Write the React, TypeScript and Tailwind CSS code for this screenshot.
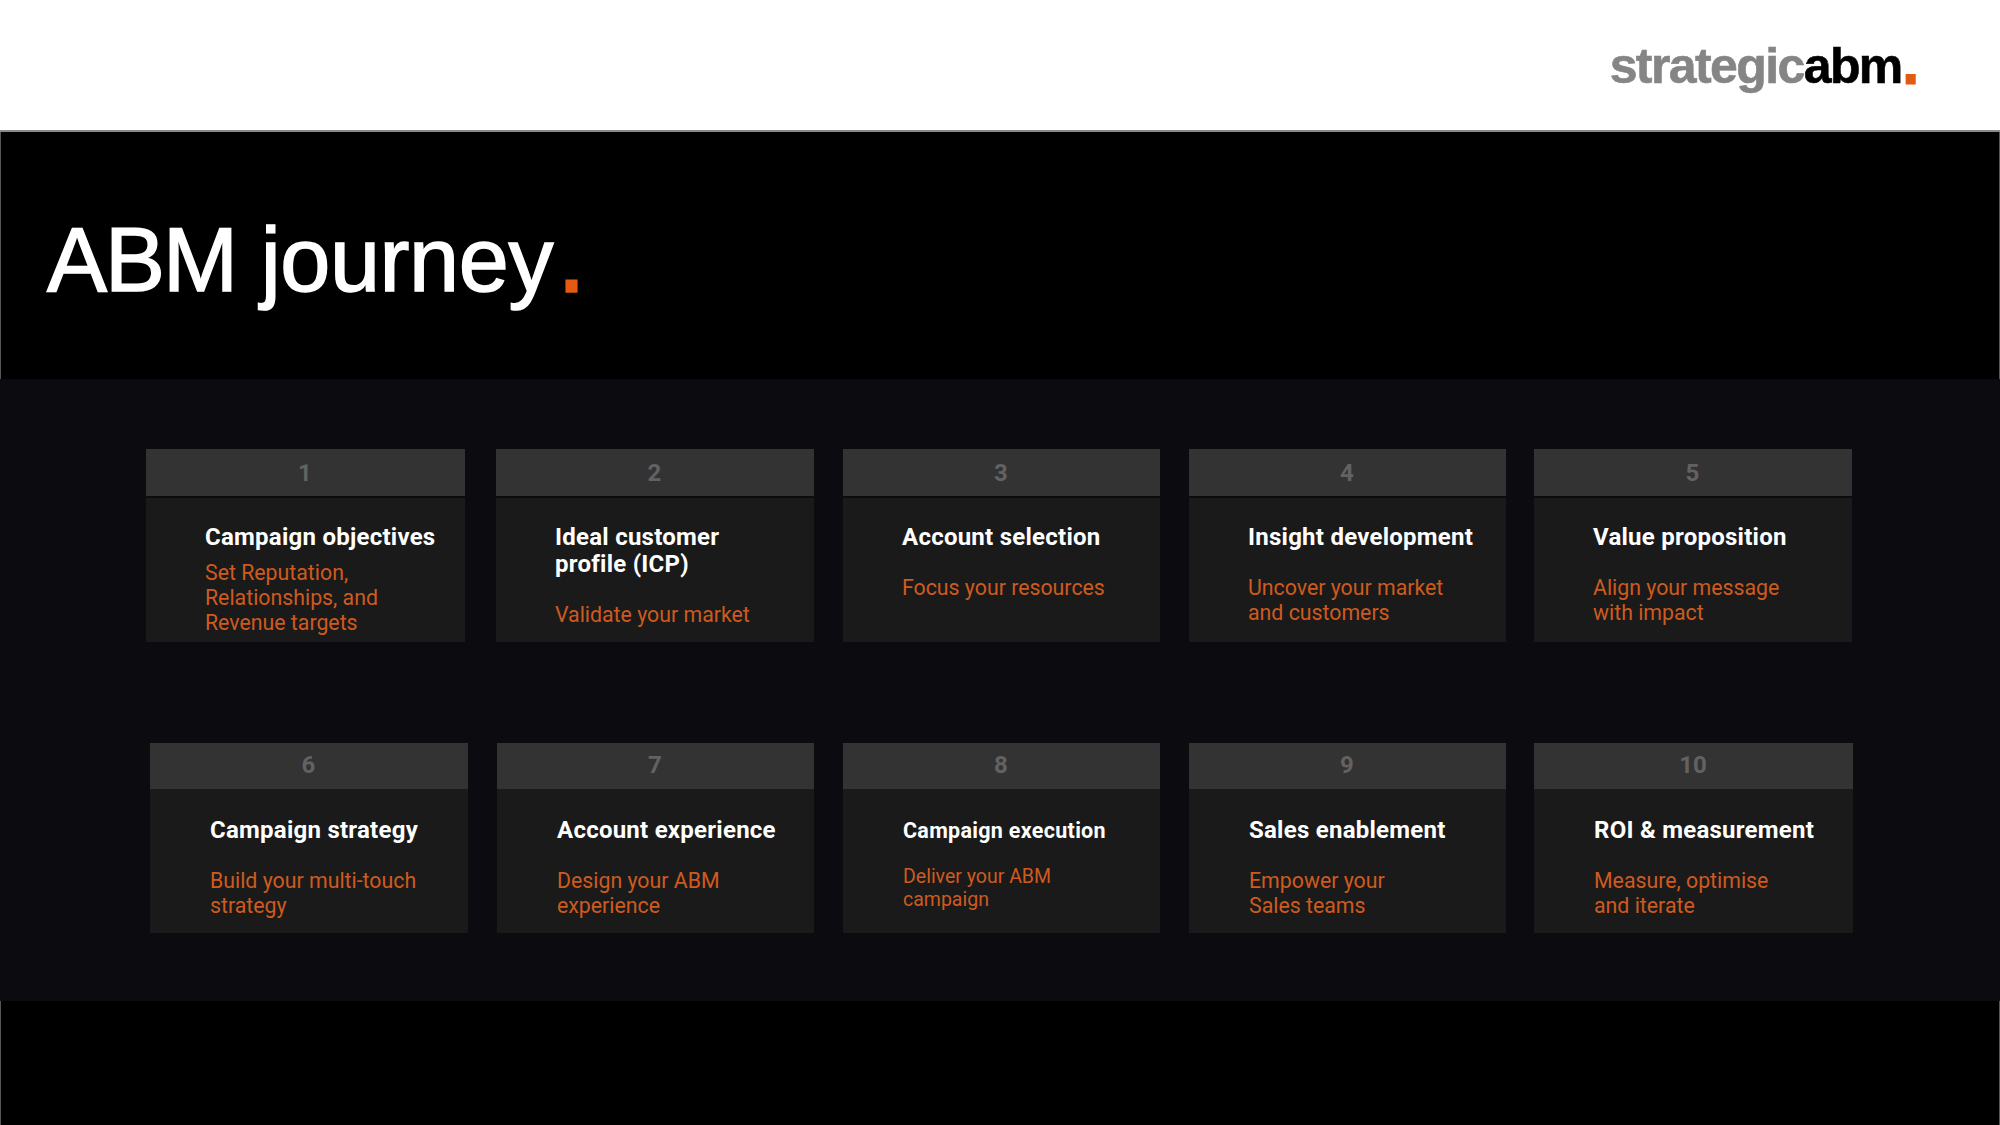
const rowOne = [
  { n: "1", title: ["Campaign objectives"], desc: ["Set Reputation,", "Relationships, and", "Revenue targets"], width: "w-[319px]", space: "", gap: "mt-[9px]", small: false },
  { n: "2", title: ["Ideal customer", "profile (ICP)"], desc: ["Validate your market"], width: "w-[318px]", space: "ml-[31px]", gap: "mt-[24px]", small: false },
  { n: "3", title: ["Account selection"], desc: ["Focus your resources"], width: "w-[317px]", space: "ml-[29px]", gap: "mt-[24px]", small: false },
  { n: "4", title: ["Insight development"], desc: ["Uncover your market", "and customers"], width: "w-[317px]", space: "ml-[29px]", gap: "mt-[24px]", small: false },
  { n: "5", title: ["Value proposition"], desc: ["Align your message", "with impact"], width: "w-[318px]", space: "ml-[28px]", gap: "mt-[24px]", small: false },
];

const rowTwo = [
  { n: "6", title: ["Campaign strategy"], desc: ["Build your multi-touch", "strategy"], width: "w-[318px]", space: "", gap: "mt-[24px]", small: false },
  { n: "7", title: ["Account experience"], desc: ["Design your ABM", "experience"], width: "w-[317px]", space: "ml-[29px]", gap: "mt-[24px]", small: false },
  { n: "8", title: ["Campaign execution"], desc: ["Deliver your ABM", "campaign"], width: "w-[317px]", space: "ml-[29px]", gap: "mt-[21px]", small: true },
  { n: "9", title: ["Sales enablement"], desc: ["Empower your", "Sales teams"], width: "w-[317px]", space: "ml-[29px]", gap: "mt-[24px]", small: false },
  { n: "10", title: ["ROI & measurement"], desc: ["Measure, optimise", "and iterate"], width: "w-[319px]", space: "ml-[28px]", gap: "mt-[24px]", small: false },
];

type Step = (typeof rowOne)[number];

function StepCard({ step, headClass, bodyClass }: { step: Step; headClass: string; bodyClass: string }) {
  return (
    <div className={`flex flex-col ${step.width} ${step.space}`}>
      <div className={`flex items-center justify-center bg-[#333333] pr-[1px] font-['Roboto',sans-serif] text-[24px] font-bold text-[#626262] ${headClass}`}>
        {step.n}
      </div>
      <div className={`bg-[#1a1a1a] ${bodyClass}`}>
        <h3 className={step.small ? "font-['Roboto',sans-serif] text-[21.5px] leading-[27px] font-bold tracking-[0.3px] text-white" : "font-['Roboto',sans-serif] text-[24px] leading-[27px] font-bold tracking-[0.25px] text-white"}>
          {step.title.map((line) => (
            <div key={line}>{line}</div>
          ))}
        </h3>
        <p className={step.small ? `${step.gap} font-['Roboto',sans-serif] text-[19.5px] leading-[23px] text-[#cf5a1e]` : `${step.gap} font-['Roboto',sans-serif] text-[21.3px] leading-[25px] text-[#cf5a1e]`}>
          {step.desc.map((line) => (
            <div key={line}>{line}</div>
          ))}
        </p>
      </div>
    </div>
  );
}

export default function App() {
  return (
    <div className="flex h-[1125px] w-[2000px] flex-col overflow-hidden bg-black">
      <header className="flex h-[132px] items-start justify-end border-b-2 border-[#8a8a8a] bg-white pt-[36px] pr-[84px]">
        <div className="font-['Liberation_Sans',sans-serif] text-[50px] leading-[60px] font-bold tracking-[-1.6px]">
          <span className="text-[#858585] [-webkit-text-stroke:0.6px_#858585]">strategic</span>
          <span className="text-black [-webkit-text-stroke:0.6px_black]">abm</span>
          <span className="ml-[2px] text-[#e35a12] [-webkit-text-stroke:3px_#e35a12]">.</span>
        </div>
      </header>

      <section className="flex h-[247px] items-center border-x border-[#555555] pt-[8px] pl-[46px]">
        <h1 className="font-['Liberation_Sans',sans-serif] text-[90px] leading-[100px] tracking-[-0.4px] text-white [-webkit-text-stroke:1.5px_white]">
          <span className="tracking-[-2px]">ABM</span> journey
          <span className="ml-[6px] text-[#e35a12] [-webkit-text-stroke:3.5px_#e35a12]">.</span>
        </h1>
      </section>

      <section className="flex h-[622px] flex-col bg-[#0b0b10] pt-[70px]">
        <div className="ml-[146px] flex">
          {rowOne.map((step) => (
            <StepCard key={step.n} step={step} headClass="h-[47px]" bodyClass="mt-[2px] h-[144px] pt-[26px] pl-[59px]" />
          ))}
        </div>
        <div className="mt-[101px] ml-[150px] flex">
          {rowTwo.map((step) => (
            <StepCard key={step.n} step={step} headClass="h-[46px] pb-[3px]" bodyClass="h-[144px] pt-[28px] pl-[60px]" />
          ))}
        </div>
      </section>

      <div className="flex-1 border-x border-[#555555]" />
    </div>
  );
}
